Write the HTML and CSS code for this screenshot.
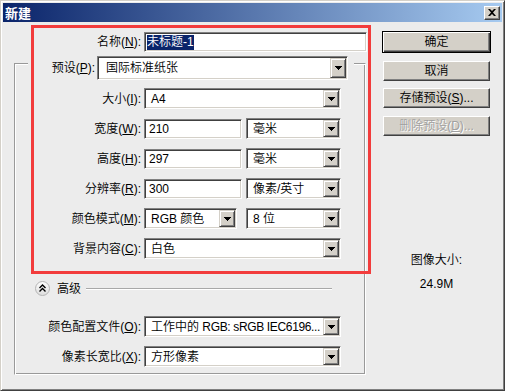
FILE: index.html
```html
<!DOCTYPE html>
<html lang="zh-CN">
<head>
    <meta charset="UTF-8">
    <title>新建</title>
    <link rel="stylesheet" href="styles.css">
</head>
<body>
<div class="window">
    <div class="titlebar">
        <span class="title">新建</span>
        <button class="close-btn" aria-label="关闭">
            <svg width="8" height="7" viewBox="0 0 8 7"><path d="M0 0h2l2 2 2-2h2L5 3.5 8 7H6L4 5 2 7H0l3-3.5z" fill="#000"/></svg>
        </button>
    </div>

    <div class="dialog">
        <div class="form">
            <div class="row name-row">
                <label class="lbl">名称(<u>N</u>):</label>
                <div class="field name-field"><span class="selected">未标题-1</span></div>
            </div>

            <div class="group">
                <div class="preset-row">
                    <label>预设(<u>P</u>):</label>
                    <div class="select preset-select">
                        <span class="val">国际标准纸张</span>
                        <span class="arrow"><svg width="7" height="4" viewBox="0 0 7 4"><path d="M0 0h7v1H0zM1 1h5v1H1zM2 2h3v1H2zM3 3h1v1H3z"/></svg></span>
                    </div>
                </div>

                <div class="row size-row">
                    <label class="lbl">大小(<u>I</u>):</label>
                    <div class="select wide">
                        <span class="val">A4</span>
                        <span class="arrow"><svg width="7" height="4" viewBox="0 0 7 4"><path d="M0 0h7v1H0zM1 1h5v1H1zM2 2h3v1H2zM3 3h1v1H3z"/></svg></span>
                    </div>
                </div>

                <div class="row">
                    <label class="lbl">宽度(<u>W</u>):</label>
                    <div class="field num">210</div>
                    <div class="select unit">
                        <span class="val">毫米</span>
                        <span class="arrow"><svg width="7" height="4" viewBox="0 0 7 4"><path d="M0 0h7v1H0zM1 1h5v1H1zM2 2h3v1H2zM3 3h1v1H3z"/></svg></span>
                    </div>
                </div>

                <div class="row">
                    <label class="lbl">高度(<u>H</u>):</label>
                    <div class="field num">297</div>
                    <div class="select unit">
                        <span class="val">毫米</span>
                        <span class="arrow"><svg width="7" height="4" viewBox="0 0 7 4"><path d="M0 0h7v1H0zM1 1h5v1H1zM2 2h3v1H2zM3 3h1v1H3z"/></svg></span>
                    </div>
                </div>

                <div class="row">
                    <label class="lbl">分辨率(<u>R</u>):</label>
                    <div class="field num">300</div>
                    <div class="select unit">
                        <span class="val">像素/英寸</span>
                        <span class="arrow"><svg width="7" height="4" viewBox="0 0 7 4"><path d="M0 0h7v1H0zM1 1h5v1H1zM2 2h3v1H2zM3 3h1v1H3z"/></svg></span>
                    </div>
                </div>

                <div class="row">
                    <label class="lbl">颜色模式(<u>M</u>):</label>
                    <div class="select mode">
                        <span class="val">RGB 颜色</span>
                        <span class="arrow"><svg width="7" height="4" viewBox="0 0 7 4"><path d="M0 0h7v1H0zM1 1h5v1H1zM2 2h3v1H2zM3 3h1v1H3z"/></svg></span>
                    </div>
                    <div class="select bits">
                        <span class="val">8 位</span>
                        <span class="arrow"><svg width="7" height="4" viewBox="0 0 7 4"><path d="M0 0h7v1H0zM1 1h5v1H1zM2 2h3v1H2zM3 3h1v1H3z"/></svg></span>
                    </div>
                </div>

                <div class="row">
                    <label class="lbl">背景内容(<u>C</u>):</label>
                    <div class="select wide">
                        <span class="val">白色</span>
                        <span class="arrow"><svg width="7" height="4" viewBox="0 0 7 4"><path d="M0 0h7v1H0zM1 1h5v1H1zM2 2h3v1H2zM3 3h1v1H3z"/></svg></span>
                    </div>
                </div>

                <div class="adv-row">
                    <svg class="adv-toggle" width="15" height="15" viewBox="0 0 15 15">
                        <defs>
                            <linearGradient id="knob" x1="0" y1="0" x2="0" y2="1">
                                <stop offset="0" stop-color="#ffffff"/>
                                <stop offset="1" stop-color="#dcdcdc"/>
                            </linearGradient>
                        </defs>
                        <circle cx="7.5" cy="7.5" r="7" fill="url(#knob)" stroke="#b4b4b4"/>
                        <polyline points="4.5,7 7.5,4 10.5,7" fill="none" stroke="#000" stroke-width="1.4"/>
                        <polyline points="4.5,10.5 7.5,7.5 10.5,10.5" fill="none" stroke="#000" stroke-width="1.4"/>
                    </svg>
                    <span class="adv-label">高级</span>
                    <span class="adv-line"></span>
                </div>

                <div class="row profile-row">
                    <label class="lbl">颜色配置文件(<u>O</u>):</label>
                    <div class="select wide">
                        <span class="val">工作中的 <span class="tight">RGB: sRGB IEC6196...</span></span>
                        <span class="arrow"><svg width="7" height="4" viewBox="0 0 7 4"><path d="M0 0h7v1H0zM1 1h5v1H1zM2 2h3v1H2zM3 3h1v1H3z"/></svg></span>
                    </div>
                </div>

                <div class="row">
                    <label class="lbl">像素长宽比(<u>X</u>):</label>
                    <div class="select wide">
                        <span class="val">方形像素</span>
                        <span class="arrow"><svg width="7" height="4" viewBox="0 0 7 4"><path d="M0 0h7v1H0zM1 1h5v1H1zM2 2h3v1H2zM3 3h1v1H3z"/></svg></span>
                    </div>
                </div>
            </div>
        </div>

        <div class="side">
            <button class="btn default">确定</button>
            <button class="btn">取消</button>
            <button class="btn">存储预设(<u>S</u>)...</button>
            <button class="btn disabled" disabled>删除预设(<u>D</u>)...</button>
            <div class="info">
                <div class="info-label">图像大小:</div>
                <div class="info-value">24.9M</div>
            </div>
        </div>
    </div>

    <!-- highlight frame drawn over the main settings -->
    <div class="highlight"></div>
</div>
</body>
</html>
```

FILE: styles.css
```css
* {
    box-sizing: border-box;
}
body {
    margin: 0;
    font-family: "Liberation Sans", "Noto Sans CJK SC", sans-serif;
    font-size: 12px;
    font-weight: 350;
    color: #000;
}
u {
    text-decoration: underline;
    text-underline-offset: 1px;
}

/* window frame */
.window {
    position: relative;
    width: 505px;
    height: 391px;
    background-color: #ececec;
    border: 1px solid;
    border-color: #d4d0c8 #404040 #404040 #d4d0c8;
    box-shadow: inset 1px 1px #fff, inset -1px -1px #808080;
    padding: 2px;
}
.titlebar {
    height: 19px;
    display: flex;
    align-items: center;
    justify-content: space-between;
    padding: 0 2px 0 2px;
    background: linear-gradient(to right, #0a246a, #a6caf0);
}
.title {
    color: #fff;
    font-family: "Noto Sans CJK SC", sans-serif;
    font-weight: bold;
    font-size: 13px;
    line-height: 19px;
}
.close-btn {
    width: 16px;
    height: 14px;
    padding: 0;
    display: flex;
    align-items: center;
    justify-content: center;
    background-color: #d4d0c8;
    border: 1px solid;
    border-color: #fff #404040 #404040 #fff;
    box-shadow: inset -1px -1px #808080;
}

/* dialog body */
.dialog {
    display: flex;
    gap: 16px;
    padding-left: 11px;
}
.form {
    width: 353px;
    flex: none;
}
.row {
    display: flex;
    align-items: center;
    height: 21px;
    margin-top: 9px;
}
.lbl {
    width: 129px;
    flex: none;
    text-align: right;
    padding-right: 3px;
    line-height: 14px;
    white-space: nowrap;
}
.name-row {
    margin-top: 10px;
    height: 20px;
}
.name-row .lbl {
    width: 130px;
}

/* sunken edit boxes */
.field {
    height: 20px;
    display: flex;
    align-items: center;
    background-color: #fff;
    border: 1px solid;
    border-color: #808080 #fff #fff #808080;
    box-shadow: inset 1px 1px #404040, inset -1px -1px #d4d0c8;
    padding-left: 4px;
    line-height: 14px;
    white-space: nowrap;
}
.name-field {
    width: 223px;
    padding-left: 2px;
}
.selected {
    background-color: #0a246a;
    color: #fff;
    line-height: 15px;
}
.num {
    width: 98px;
}

/* drop-down lists */
.select {
    height: 21px;
    display: flex;
    background-color: #fff;
    border: 1px solid;
    border-color: #808080 #fff #fff #808080;
    box-shadow: inset 1px 1px #404040, inset -1px -1px #d4d0c8;
    padding: 1px;
}
.select .val {
    flex: 1;
    display: flex;
    align-items: center;
    padding-left: 5px;
    line-height: 14px;
    white-space: pre;
    overflow: hidden;
}
.tight {
    letter-spacing: -0.35px;
}
.select .arrow {
    width: 16px;
    flex: none;
    display: flex;
    align-items: center;
    justify-content: center;
    background-color: #d4d0c8;
    border: 1px solid;
    border-color: #d4d0c8 #404040 #404040 #d4d0c8;
    box-shadow: inset 1px 1px #fff, inset -1px -1px #808080;
}
.wide {
    width: 197px;
}
.unit {
    width: 95px;
    margin-left: 4px;
}
.mode {
    width: 93px;
}
.bits {
    width: 95px;
    margin-left: 9px;
}

/* etched group box, preset row sits on its top edge */
.group {
    margin-top: 11px;
    width: 352px;
    border: 1px solid;
    border-color: #999 #fff #fff #999;
    box-shadow: inset 1px 1px #fff, inset -1px -1px #999;
    padding-bottom: 7px;
}
.preset-row {
    margin: -8px 0 0 13px;
    width: 326px;
    height: 24px;
    display: flex;
    align-items: center;
    justify-content: flex-end;
    gap: 2px;
    padding-right: 6px;
    background-color: #ececec;
    line-height: 14px;
}
.preset-select {
    width: 251px;
    height: 24px;
}
.preset-select .val {
    padding-left: 7px;
}
.size-row {
    margin-top: 8px;
}

/* advanced section */
.adv-row {
    display: flex;
    align-items: center;
    height: 15px;
    margin-top: 22px;
    padding-left: 20px;
}
.adv-toggle {
    flex: none;
}
.adv-label {
    margin-left: 7px;
    line-height: 14px;
}
.adv-line {
    flex: 1;
    height: 2px;
    margin: 0 33px 0 5px;
    border-top: 1px solid #a8a8a8;
    border-bottom: 1px solid #fff;
}
.profile-row {
    margin-top: 20px;
}

/* right column */
.side {
    width: 107px;
    padding-top: 9px;
}
.btn {
    display: flex;
    align-items: center;
    justify-content: center;
    width: 107px;
    height: 20px;
    padding: 0;
    margin-top: 8px;
    font-family: inherit;
    font-size: 12px;
    font-weight: 350;
    color: #000;
    line-height: 14px;
    background-color: #d4d0c8;
    border: 1px solid;
    border-color: #fff #404040 #404040 #fff;
    box-shadow: inset -1px -1px #808080;
}
.btn.default {
    margin: 0 -1px;
    width: 109px;
    height: 22px;
    border-color: #000;
    box-shadow: inset 1px 1px #fff, inset -1px -1px #404040, inset -2px -2px #808080;
}
.btn:nth-child(3) {
    margin-top: 7px;
}
.btn.disabled {
    color: #a0a0a0;
    text-shadow: 1px 1px #fff;
}
.info {
    margin-top: 116px;
    text-align: center;
    line-height: 16px;
}
.info-value {
    margin-top: 8px;
}

/* red annotation frame */
.highlight {
    position: absolute;
    left: 30px;
    top: 24px;
    width: 340px;
    height: 249px;
    border: 3px solid #f23c3c;
    pointer-events: none;
}
```
